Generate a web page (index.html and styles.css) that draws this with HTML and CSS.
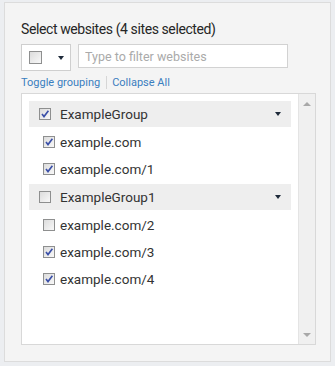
FILE: index.html
```html
<!DOCTYPE html>
<html lang="en">
<head>
  <meta charset="UTF-8" />
  <title>Select websites</title>
  <link rel="stylesheet" href="styles.css">
</head>
<body>
  <!-- Website picker panel -->
  <div class="panel">
    <h2 class="panel-title">Select websites (4 sites selected)</h2>

    <!-- Toolbar: bulk select + filter -->
    <div class="toolbar">
      <button class="bulk-select">
        <span class="cb"></span>
        <span class="caret"></span>
      </button>
      <input type="text" class="filter" placeholder="Type to filter websites" />
    </div>

    <div class="links">
      <a href="#">Toggle grouping</a>
      <span class="sep"></span>
      <a href="#">Collapse All</a>
    </div>

    <!-- Site list -->
    <div class="list-box">
      <div class="list">
        <div class="group-row">
          <span class="cb checked"><svg viewBox="0 0 10 10"><path d="M2 5 L4 7.6 L8.4 1.8" /></svg></span>
          <span class="label">ExampleGroup</span>
          <span class="caret"></span>
        </div>
        <div class="item-row">
          <span class="cb checked"><svg viewBox="0 0 10 10"><path d="M2 5 L4 7.6 L8.4 1.8" /></svg></span>
          <span class="label">example.com</span>
        </div>
        <div class="item-row">
          <span class="cb checked"><svg viewBox="0 0 10 10"><path d="M2 5 L4 7.6 L8.4 1.8" /></svg></span>
          <span class="label">example.com/1</span>
        </div>

        <div class="group-row">
          <span class="cb"></span>
          <span class="label">ExampleGroup1</span>
          <span class="caret"></span>
        </div>
        <div class="item-row">
          <span class="cb"></span>
          <span class="label">example.com/2</span>
        </div>
        <div class="item-row">
          <span class="cb checked"><svg viewBox="0 0 10 10"><path d="M2 5 L4 7.6 L8.4 1.8" /></svg></span>
          <span class="label">example.com/3</span>
        </div>
        <div class="item-row">
          <span class="cb checked"><svg viewBox="0 0 10 10"><path d="M2 5 L4 7.6 L8.4 1.8" /></svg></span>
          <span class="label">example.com/4</span>
        </div>
      </div>

      <!-- Fake scrollbar track -->
      <div class="scrollbar">
        <span class="arrow up"></span>
        <span class="arrow down"></span>
      </div>
    </div>
  </div>
</body>
</html>
```

FILE: styles.css
```css
/* Basic reset */
body, html {
  margin: 0;
  padding: 0;
}
body {
  background: #eceef1;
  font-family: Roboto, "Liberation Sans", sans-serif;
  color: #333;
}
/* Outer panel */
.panel {
  box-sizing: border-box;
  margin: 2px 0 0 4px;
  width: 327px;
  height: 360px;
  background: #f4f4f4;
  border: 1px solid #dcdcdc;
  padding: 16px 15px 0 16px;
  display: flex;
  flex-direction: column;
}
.panel-title {
  margin: 0;
  font-size: 14px;
  font-weight: normal;
  line-height: 20px;
  letter-spacing: -0.4px;
  color: #262626;
}
/* Toolbar */
.toolbar {
  display: flex;
  gap: 7px;
  margin-top: 5px;
}
.bulk-select {
  box-sizing: border-box;
  width: 50px;
  height: 27px;
  background: #fff;
  border: 1px solid #cfcfcf;
  padding: 0 0 0 7px;
  display: flex;
  align-items: center;
  gap: 16px;
  cursor: pointer;
}
.bulk-select .cb {
  width: 13px;
  height: 13px;
}
.filter {
  box-sizing: border-box;
  width: 210px;
  height: 24px;
  border: 1px solid #d2d2d2;
  padding: 0 6px;
  font-family: inherit;
  font-size: 12.5px;
  color: #333;
  outline: none;
}
.filter::placeholder {
  color: #aaa;
}
/* Links row */
.links {
  display: flex;
  align-items: center;
  height: 20px;
  margin-top: 1px;
  font-size: 11px;
}
.links a {
  color: #3a7ebf;
  text-decoration: none;
}
.links .sep {
  width: 1px;
  height: 13px;
  background: #d6d6d6;
  margin: 0 5px 0 6px;
}
/* List box */
.list-box {
  box-sizing: border-box;
  margin-top: 1px;
  width: 295px;
  height: 252px;
  background: #fff;
  border: 1px solid #d8d8d8;
  display: flex;
}
.list {
  flex: 1;
  padding: 7px 7px 0 7px;
  display: flex;
  flex-direction: column;
}
.group-row {
  display: flex;
  align-items: center;
  height: 26px;
  background: #eeeeee;
  padding: 0 10px 0 10px;
  gap: 9px;
  font-size: 13.5px;
}
.group-row + .item-row {
  margin-top: 1px;
}
.item-row + .group-row {
  margin-top: 2px;
}
.group-row .label {
  flex: 1;
}
.item-row {
  display: flex;
  align-items: center;
  height: 27px;
  padding-left: 14px;
  gap: 5px;
  font-size: 13.5px;
}
/* Checkbox */
.cb {
  box-sizing: border-box;
  width: 12px;
  height: 12px;
  border: 1px solid #8e8f8f;
  background: linear-gradient(135deg, #dcdcdc, #f8f8f8);
  display: inline-flex;
  flex-shrink: 0;
}
.cb svg {
  width: 10px;
  height: 10px;
}
.cb svg path {
  fill: none;
  stroke: #3a4fa8;
  stroke-width: 1.6;
}
/* Dropdown caret */
.caret {
  width: 0;
  height: 0;
  border-left: 3.5px solid transparent;
  border-right: 3.5px solid transparent;
  border-top: 4px solid #1e2a3a;
}
/* Scrollbar */
.scrollbar {
  width: 17px;
  background: #f0f0f0;
  border-left: 1px solid #e4e4e4;
  display: flex;
  flex-direction: column;
  justify-content: space-between;
  align-items: center;
  padding: 8px 0 7px;
  box-sizing: border-box;
}
.arrow {
  width: 0;
  height: 0;
  border-left: 4px solid transparent;
  border-right: 4px solid transparent;
}
.arrow.up {
  border-bottom: 4px solid #a8a8a8;
}
.arrow.down {
  border-top: 4px solid #a8a8a8;
}
```
